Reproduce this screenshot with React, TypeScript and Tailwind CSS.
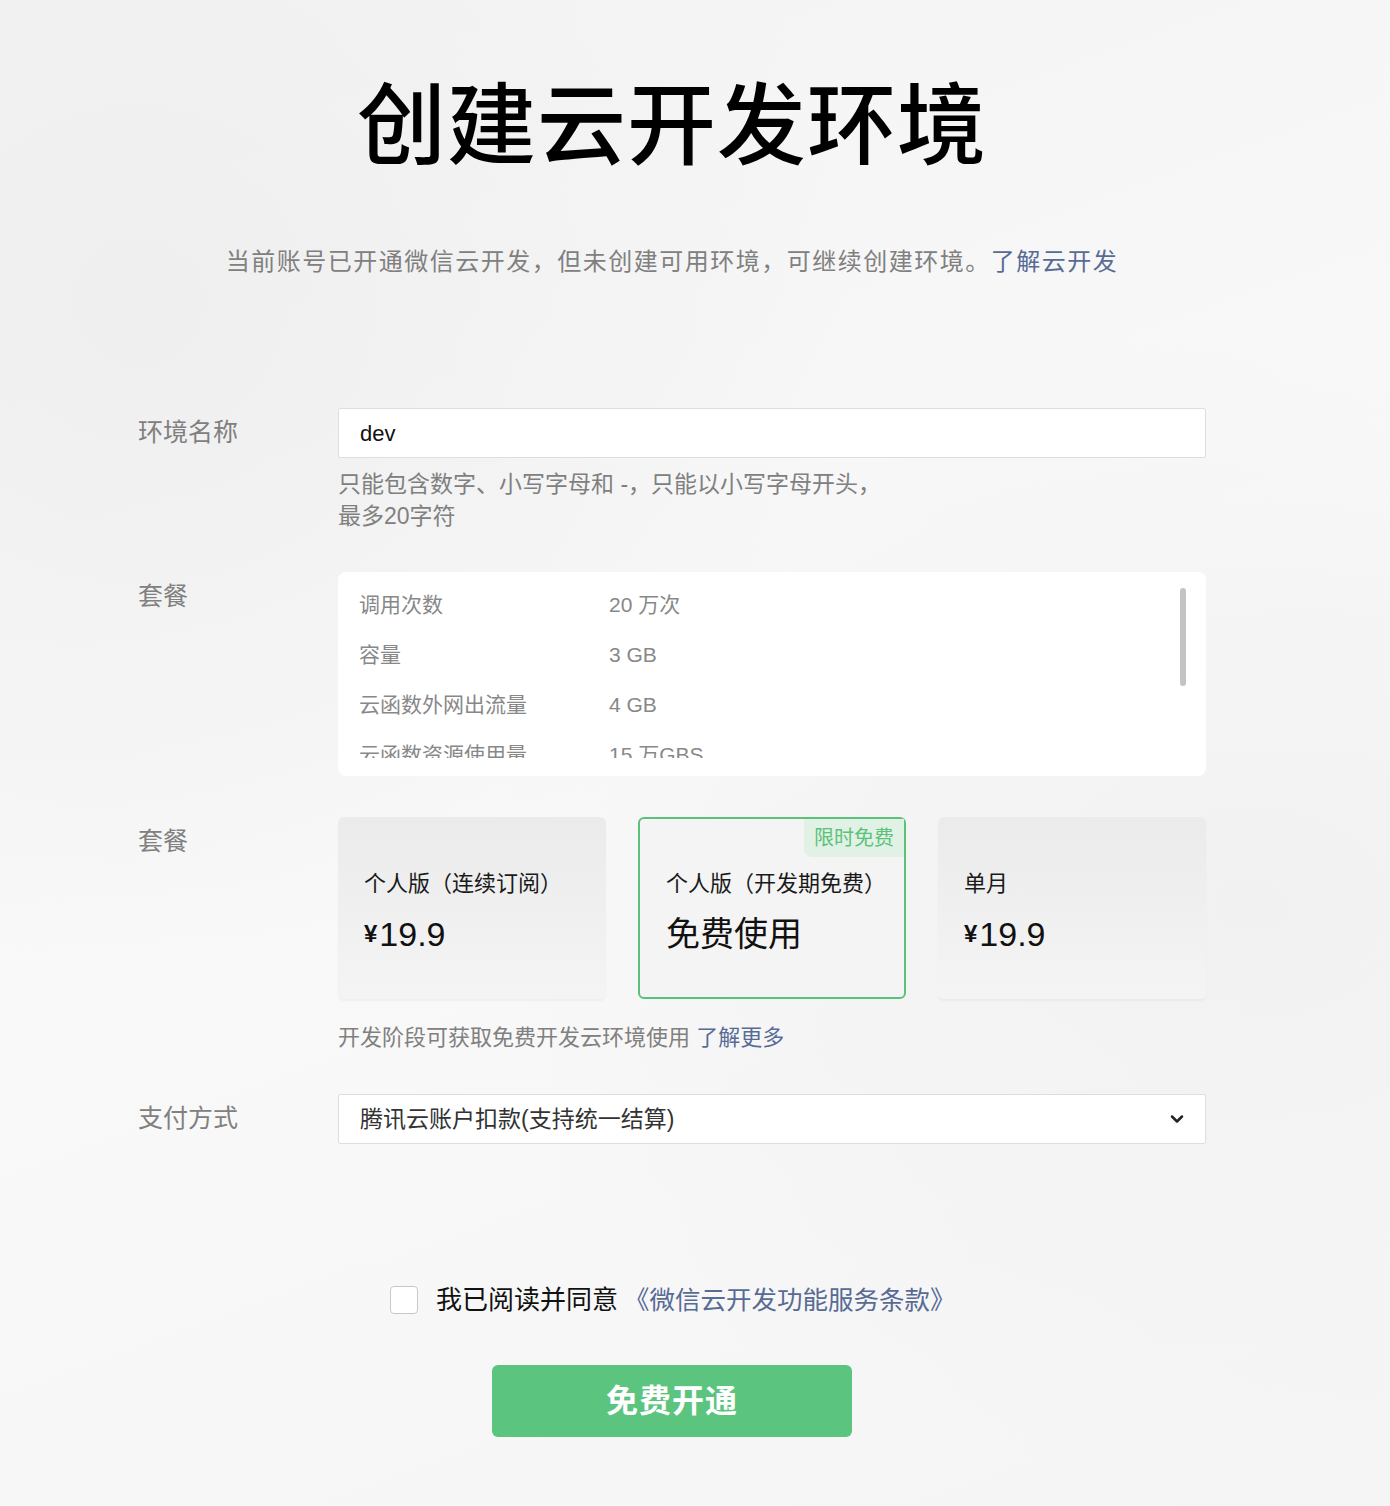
import { ChevronDown } from 'lucide-react';

const FONT = "font-['Liberation_Sans','Noto_Sans_CJK_SC',sans-serif]";

const quota = [
  { name: '调用次数', value: '20 万次' },
  { name: '容量', value: '3 GB' },
  { name: '云函数外网出流量', value: '4 GB' },
  { name: '云函数资源使用量', value: '15 万GBS' },
];

function FormRow({ label, children }: { label: string; children: React.ReactNode }) {
  return (
    <div className="grid grid-cols-[200px_868px]">
      <div className="h-[50px] flex items-center text-[25px] text-[#808080]">{label}</div>
      <div>{children}</div>
    </div>
  );
}

function PlanCard({ title, price, selected }: { title: string; price: string; selected?: boolean }) {
  return (
    <div
      className={
        'relative h-[182px] rounded-[6px] flex flex-col justify-center pl-[26px] ' +
        (selected
          ? 'border-2 border-[#5bc27a] bg-[#f4f4f4]'
          : 'bg-gradient-to-b from-[#ebebeb] to-[#f4f4f4] shadow-[0_2px_2px_rgba(0,0,0,0.04)]')
      }
    >
      {selected && (
        <div className="absolute top-0 right-0 h-[38px] px-[10px] flex items-center rounded-bl-[8px] bg-[#e2f1e5] text-[20px] text-[#5bc27a]">
          限时免费
        </div>
      )}
      <div className="text-[22px] text-[#1a1a1a] leading-[32px] mt-[4px]">{title}</div>
      <div className="mt-[16px] text-[34px] text-[#111] leading-[36px]">
        {price.startsWith('¥') ? (
          <>
            <span className="text-[24px] font-bold align-[4px] mr-[2px]">¥</span>
            {price.slice(1)}
          </>
        ) : (
          price
        )}
      </div>
    </div>
  );
}

export default function App() {
  return (
    <div
      className={
        FONT +
        ' min-h-[1506px] w-full bg-[#f6f6f6] bg-[radial-gradient(ellipse_at_10%_20%,#efefef_0%,transparent_40%),radial-gradient(ellipse_at_90%_60%,#f1f1f1_0%,transparent_45%),linear-gradient(160deg,#f3f3f3_0%,#f9f9f9_50%,#f5f5f5_100%)]'
      }
    >
      <div className="ml-[138px] w-[1068px] pt-[82px] pb-[71px] flex flex-col">
        <h1 className="text-center text-[89px] leading-none font-medium text-black tracking-[1px]">
          创建云开发环境
        </h1>
        <p className="mt-[75px] text-center text-[24px] leading-[32px] tracking-[1.5px] text-[#808080]">
          当前账号已开通微信云开发，但未创建可用环境，可继续创建环境。
          <span className="text-[#576b95]">了解云开发</span>
        </p>

        <div className="mt-[130px] flex flex-col">
          <FormRow label="环境名称">
            <div className="h-[50px] bg-white border border-[#dedede] rounded-[2px] flex items-center pl-[21px] text-[22px] text-[#111]">
              dev
            </div>
            <p className="mt-[10px] text-[23px] leading-[32px] text-[#808080]">
              只能包含数字、小写字母和 -，只能以小写字母开头，
              <br />
              最多20字符
            </p>
          </FormRow>

          <div className="mt-[40px]">
            <FormRow label="套餐">
              <div className="relative bg-white rounded-[8px] pt-[8px] pb-[18px]">
                {/* scroll area: last row is cut off like in the design */}
                <div className="h-[178px] overflow-hidden">
                  {quota.map(q => (
                    <div key={q.name} className="h-[50px] flex items-center text-[21px] text-[#888]">
                      <span className="w-[271px] pl-[21px]">{q.name}</span>
                      <span>{q.value}</span>
                    </div>
                  ))}
                </div>
                <div className="absolute right-[20px] top-[16px] w-[6px] h-[98px] rounded-full bg-[#c4c4c4]" />
              </div>
            </FormRow>
          </div>

          <div className="mt-[41px]">
            <FormRow label="套餐">
              <div className="grid grid-cols-3 gap-[32px]">
                <PlanCard title="个人版（连续订阅）" price="¥19.9" />
                <PlanCard title="个人版（开发期免费）" price="免费使用" selected />
                <PlanCard title="单月" price="¥19.9" />
              </div>
              <p className="mt-[23px] text-[22px] leading-[32px] text-[#808080]">
                开发阶段可获取免费开发云环境使用 <span className="text-[#576b95]">了解更多</span>
              </p>
            </FormRow>
          </div>

          <div className="mt-[40px]">
            <FormRow label="支付方式">
              <div className="h-[50px] bg-white border border-[#dedede] rounded-[2px] flex items-center justify-between pl-[21px] pr-[18px] text-[23px] text-[#333]">
                <span>腾讯云账户扣款(支持统一结算)</span>
                <ChevronDown size={20} strokeWidth={3} className="text-[#222]" />
              </div>
            </FormRow>
          </div>
        </div>

        <div className="mt-[136px] h-[40px] flex items-center pl-[252px]">
          <div className="w-[28px] h-[28px] rounded-[4px] border border-[#c8c8c8] bg-white" />
          <span className="ml-[18px] text-[26px] text-[#111]">我已阅读并同意</span>
          <span className="ml-[6px] text-[25.5px] text-[#576b95]">《微信云开发功能服务条款》</span>
        </div>

        <button className="mt-[45px] self-center w-[360px] h-[72px] rounded-[6px] bg-[#5bc47f] text-white text-[32px] font-bold tracking-[1px]">
          免费开通
        </button>
      </div>
    </div>
  );
}
